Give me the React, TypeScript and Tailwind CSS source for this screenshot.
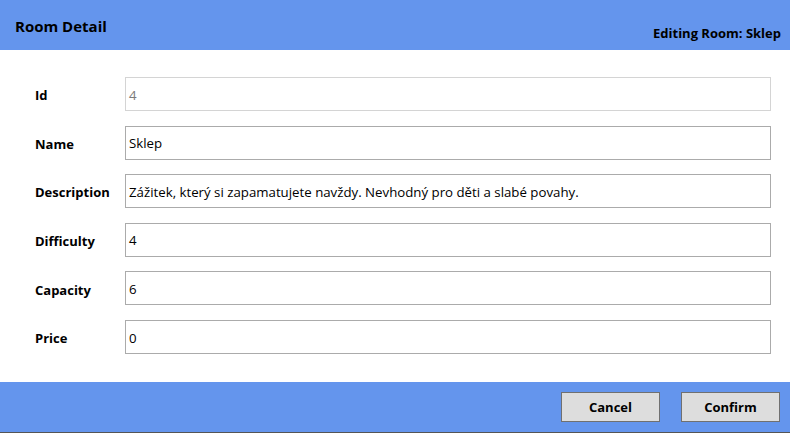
import React from 'react';

const fields = [
  { label: 'Id', value: '4', disabled: true },
  { label: 'Name', value: 'Sklep' },
  { label: 'Description', value: 'Zážitek, který si zapamatujete navždy. Nevhodný pro děti a slabé povahy.' },
  { label: 'Difficulty', value: '4' },
  { label: 'Capacity', value: '6' },
  { label: 'Price', value: '0' },
];

export default function App() {
  return (
    <div className="w-[790px] h-[433px] flex flex-col bg-white font-['Open_Sans','Noto_Sans',sans-serif] text-black">
      <div className="h-[50px] bg-[#6495ed] flex justify-between px-[15px]">
        <h1 className="text-[15px] font-bold self-center mt-[3px]">Room Detail</h1>
        <span className="text-[13px] font-bold self-end mb-[7px] -mr-[6px]">Editing Room: Sklep</span>
      </div>

      <div className="flex-1 flex flex-col gap-[14.6px] pt-[27px] pl-[35px] pr-[19px]">
        {fields.map((f) => (
          <div key={f.label} className="flex items-center h-[34px]">
            <span className="w-[90px] text-[13px] font-bold pt-[4px]">{f.label}</span>
            <div
              className={`flex-1 h-full flex items-center px-[3px] pt-[3px] text-[13.25px] border ${
                f.disabled ? 'border-[#d4d4d4] text-[#7a7a7a]' : 'border-[#ababab]'
              }`}
            >
              {f.value}
            </div>
          </div>
        ))}
      </div>

      <div className="h-[51px] bg-[#6495ed] border-b border-[#555555] flex items-center justify-end gap-[21px] pr-[10px] pb-[1px]">
        <button className="w-[99px] h-[30px] bg-[#dddddd] border border-[#707070] text-[13px] font-bold pt-[3px]">Cancel</button>
        <button className="w-[99px] h-[30px] bg-[#dddddd] border border-[#707070] text-[13px] font-bold pt-[3px]">Confirm</button>
      </div>
    </div>
  );
}
